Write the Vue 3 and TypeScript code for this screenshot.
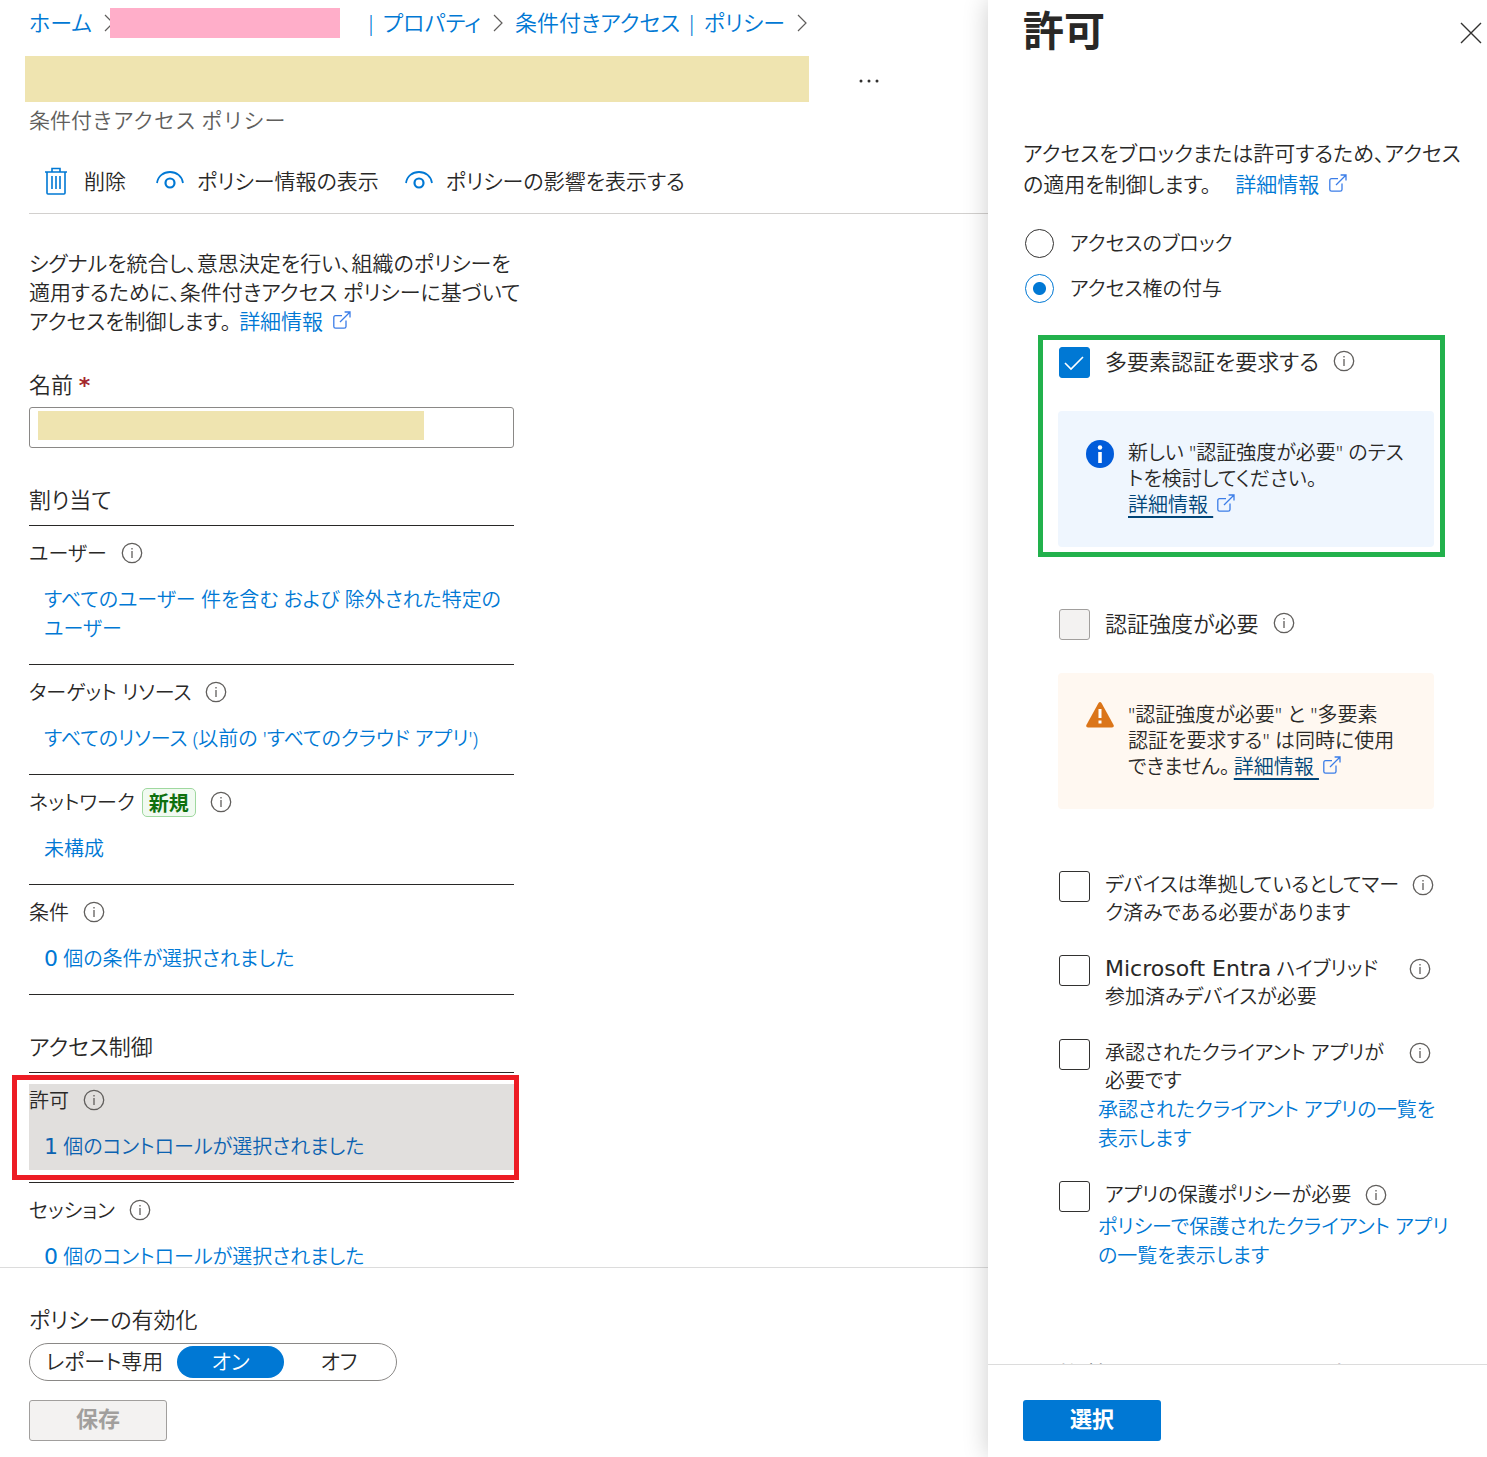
<script setup lang="ts">
import { h, ref } from 'vue'

interface PolicyRow {
  label: string
  count?: string
  value: string[]
  badge?: string
  selected?: boolean
}

interface GrantOption {
  id: string
  brand?: string
  label: string[]
  link?: string[]
}

const assignments: PolicyRow[] = [
  { label: 'ユーザー', value: ['すべてのユーザー 件を含む および 除外された特定の', 'ユーザー'] },
  { label: 'ターゲット リソース', value: ["すべてのリソース (以前の 'すべてのクラウド アプリ')"] },
  { label: 'ネットワーク', value: ['未構成'], badge: '新規' },
  { label: '条件', count: '0', value: [' 個の条件が選択されました'] },
]

const controls: PolicyRow[] = [
  { label: '許可', count: '1', value: [' 個のコントロールが選択されました'], selected: true },
  { label: 'セッション', count: '0', value: [' 個のコントロールが選択されました'] },
]

const sections = [
  { title: '割り当て', rows: assignments },
  { title: 'アクセス制御', rows: controls },
]

const grantOptions: GrantOption[] = [
  { id: 'compliant', label: ['デバイスは準拠しているとしてマー', 'ク済みである必要があります'] },
  { id: 'hybrid', brand: 'Microsoft Entra', label: [' ハイブリッド', '参加済みデバイスが必要'] },
  {
    id: 'approved',
    label: ['承認されたクライアント アプリが', '必要です'],
    link: ['承認されたクライアント アプリの一覧を', '表示します'],
  },
  {
    id: 'protection',
    label: ['アプリの保護ポリシーが必要'],
    link: ['ポリシーで保護されたクライアント アプリ', 'の一覧を表示します'],
  },
]

const states = ['レポート専用', 'オン', 'オフ']
const policyState = ref('オン')
const accessMode = ref('grant')
const requireMfa = ref(true)
const policyName = ref('')

const InfoIcon = () =>
  h('svg', { class: 'info-icon', width: 22, height: 22, viewBox: '0 0 22 22', fill: 'none', stroke: '#605e5c', 'aria-hidden': 'true' }, [
    h('circle', { cx: 11, cy: 11, r: 9.7, 'stroke-width': 1.3 }),
    h('path', { d: 'M11 9v7M11 6v1.6', 'stroke-width': 1.3 }),
  ])

const LinkIcon = () =>
  h('svg', { class: 'link-icon', width: 18, height: 18, viewBox: '0 0 18 18', fill: 'none', stroke: '#3b7de8', 'stroke-width': 1.3, 'aria-hidden': 'true' }, [
    h('path', { d: 'M9 4.7H2.6Q.8 4.7.8 6.5V15.4Q.8 17.2 2.6 17.2H11.2Q13 17.2 13 15.4V9.5' }),
    h('path', { d: 'M7 11 16.8 1.2M11.6 1H17V6.4' }),
  ])

const Chevron = () =>
  h('svg', { class: 'chevron', width: 10, height: 18, viewBox: '0 0 10 18', fill: 'none', stroke: '#605e5c', 'stroke-width': 1.2, 'aria-hidden': 'true' }, [
    h('path', { d: 'M1 1 9 9 1 17' }),
  ])

const EyeIcon = () =>
  h('svg', { width: 28, height: 20, viewBox: '0 0 28 20', fill: 'none', stroke: '#0078d4', 'aria-hidden': 'true' }, [
    h('path', { d: 'M1 12C2 5 7.500 1 14 1S26 5 27 12', 'stroke-width': 1.8 }),
    h('circle', { cx: 14, cy: 12, r: 4.5, 'stroke-width': 2.2 }),
  ])
</script>

<template>
  <div class="shell">
    <main class="policy">
      <header class="policy-head">
        <nav class="breadcrumb" aria-label="階層リンク">
          <a href="#">ホーム</a>
          <Chevron />
          <span class="tenant"></span>
          <a href="#"><span class="bar">|</span>プロパティ</a>
          <Chevron />
          <a href="#">条件付きアクセス <span class="bar">|</span>ポリシー</a>
          <Chevron />
        </nav>
        <div class="title-row">
          <span class="title-mask"></span>
          <button class="more" type="button" aria-label="その他">
            <svg width="20" height="4" viewBox="0 0 20 4" fill="#323130"><circle cx="2" cy="2" r="1.500" /><circle cx="10" cy="2" r="1.500" /><circle cx="18" cy="2" r="1.500" /></svg>
          </button>
        </div>
        <p class="subtitle">条件付きアクセス ポリシー</p>
        <div class="toolbar">
          <button type="button" class="delete">
            <svg class="trash" width="24" height="28" viewBox="0 0 24 28" fill="none" stroke="#0078d4" stroke-width="1.600">
              <path d="M1 5H23M8 5V1.500H16V5M3 5V26Q3 27 4 27H20Q21 27 21 26V5" />
              <path d="M8 9V22M12 9V22M16 9V22" />
            </svg>
            削除
          </button>
          <button type="button"><EyeIcon />ポリシー情報の表示</button>
          <button type="button"><EyeIcon />ポリシーの影響を表示する</button>
        </div>
      </header>

      <div class="policy-body">
        <p class="intro">
          シグナルを統合し、意思決定を行い、組織のポリシーを<br />適用するために、条件付きアクセス ポリシーに基づいて<br />アクセスを制御します。<a href="#">詳細情報<LinkIcon /></a>
        </p>

        <label class="field-label" for="policy-name">名前 <span class="required">*</span></label>
        <div class="field">
          <input id="policy-name" v-model="policyName" type="text" />
          <span class="name-mask"></span>
        </div>

        <section v-for="section in sections" :key="section.title">
          <h2>{{ section.title }}</h2>
          <div v-for="row in section.rows" :key="row.label" class="row" :class="{ marked: row.selected }">
            <div class="row-inner">
              <div class="row-label">
                {{ row.label }}<span v-if="row.badge" class="badge">{{ row.badge }}</span><InfoIcon />
              </div>
              <a href="#" class="row-value"><b v-if="row.count" class="latin">{{ row.count }}</b><template v-for="(line, i) in row.value" :key="line"><br v-if="i" />{{ line }}</template></a>
            </div>
          </div>
        </section>
      </div>

      <footer class="policy-foot">
        <fieldset>
          <legend>ポリシーの有効化</legend>
          <div class="pill">
            <label v-for="s in states" :key="s" :class="{ on: policyState === s }">
              <input v-model="policyState" type="radio" name="state" :value="s" />{{ s }}
            </label>
          </div>
        </fieldset>
        <button class="save" type="button" disabled>保存</button>
      </footer>
    </main>

    <aside class="panel">
      <header class="panel-head">
        <h1>許可</h1>
        <button class="close" type="button" aria-label="閉じる">
          <svg width="22" height="22" viewBox="0 0 22 22" stroke="#323130" stroke-width="1.400"><path d="M1 1 21 21M21 1 1 21" /></svg>
        </button>
      </header>

      <div class="panel-body">
        <p class="panel-intro">
          アクセスをブロックまたは許可するため、アクセス<br />の適用を制御します。<a href="#">詳細情報<LinkIcon /></a>
        </p>

        <div class="radios">
          <label><input v-model="accessMode" type="radio" name="mode" value="block" />アクセスのブロック</label>
          <label><input v-model="accessMode" type="radio" name="mode" value="grant" />アクセス権の付与</label>
        </div>

        <div class="options">
          <div class="group highlighted">
            <div class="option">
              <input id="mfa" v-model="requireMfa" type="checkbox" />
              <label for="mfa">多要素認証を要求する</label>
              <InfoIcon />
            </div>
            <div class="notice info">
              <svg width="28" height="28" viewBox="0 0 28 28">
                <circle cx="14" cy="14" r="14" fill="#015cda" />
                <circle cx="14" cy="7.500" r="2.200" fill="#fff" />
                <path d="M14 12V23" stroke="#fff" stroke-width="3.600" />
              </svg>
              <p>新しい "認証強度が必要" のテス<br />トを検討してください。<br /><a href="#"><u>詳細情報&nbsp;</u><LinkIcon /></a></p>
            </div>
          </div>

          <div class="group">
            <div class="option">
              <input id="strength" type="checkbox" disabled />
              <label for="strength">認証強度が必要</label>
              <InfoIcon />
            </div>
            <div class="notice warning">
              <svg width="28" height="26" viewBox="0 0 28 26">
                <path d="M12.500 1Q14-1 15.500 1L27.600 23Q28.400 25.400 26 25.500H2Q-.4 25.400.4 23Z" fill="#db7519" />
                <path d="M14 7V16M14 18.500V21.500" stroke="#fff" stroke-width="3" />
              </svg>
              <p>"認証強度が必要" と "多要素<br />認証を要求する" は同時に使用<br />できません。<a href="#" class="after-stop"><u>詳細情報&nbsp;</u><LinkIcon /></a></p>
            </div>
          </div>

          <div class="plain-options">
            <div v-for="option in grantOptions" :key="option.id">
              <div class="option">
                <input :id="option.id" type="checkbox" />
                <label :for="option.id" :class="{ wide: option.label.length > 1 }"><b v-if="option.brand" class="latin">{{ option.brand }}</b><template v-for="(line, i) in option.label" :key="line"><br v-if="i" />{{ line }}</template></label>
                <InfoIcon />
              </div>
              <a v-if="option.link" href="#" class="option-link"><template v-for="(line, i) in option.link" :key="line"><br v-if="i" />{{ line }}</template></a>
            </div>
          </div>

          <h3>複数のコントロールの場合</h3>
        </div>
      </div>

      <footer class="panel-foot">
        <button class="select" type="button">選択</button>
      </footer>
    </aside>
  </div>
</template>

<style>
body {
  margin: 0;
  background: #fff;
}
</style>

<style scoped>
.shell {
  display: grid;
  grid-template-columns: minmax(0, 1fr) 499px;
  height: 100vh;
  overflow: hidden;
  color: #292827;
  font-family: "Noto Sans", "Noto Sans CJK JP", sans-serif;
  font-size: 22px;
  font-weight: 350;
  font-feature-settings: "palt";
  line-height: 29px;
  white-space: nowrap;
}

.shell * {
  box-sizing: border-box;
}

p,
h1,
h2,
h3 {
  margin: 0;
  font-weight: inherit;
}

svg {
  flex: none;
}

a {
  color: #0078d4;
  text-decoration: none;
}

button,
input {
  margin: 0;
  font: inherit;
  font-feature-settings: inherit;
  color: inherit;
}

button {
  padding: 0;
  border: 0;
  background: none;
}

.latin {
  font-family: "DejaVu Sans", sans-serif;
  font-size: 22px;
  font-weight: 400;
  line-height: 20px;
}

.link-icon {
  margin-left: 10px;
}

/* policy page */
.policy {
  display: flex;
  flex-direction: column;
  min-width: 0;
  min-height: 0;
}

.policy-head {
  padding-left: 29px;
}

.breadcrumb {
  display: flex;
  align-items: center;
  height: 44px;
}

.breadcrumb .chevron {
  margin: 2px 12px 0;
}

.bar {
  padding-right: 6px;
}

.tenant {
  z-index: 1;
  width: 230px;
  height: 30px;
  margin: 2px 25px 0 -16px;
  background: #ffaec9;
}

.title-row {
  display: flex;
  align-items: center;
  gap: 50px;
  margin: 12px 0 0 -4px;
}

.title-mask {
  width: 784px;
  height: 46px;
  background: #efe4b0;
}

.more {
  display: flex;
  height: 20px;
  margin-top: 4px;
  align-items: center;
}

.subtitle {
  margin-top: 4px;
  color: #605e5c;
  font-size: 21px;
  font-feature-settings: normal;
}

.toolbar {
  display: flex;
  gap: 26px;
  height: 79px;
  padding: 30px 0 0 15px;
  border-bottom: 1px solid #d2d0ce;
  font-size: 21px;
}

.toolbar button {
  display: flex;
  align-items: center;
  gap: 13px;
  height: 32px;
}

.toolbar .delete {
  gap: 16px;
  margin-right: 4px;
}

.policy-body {
  flex: 1;
  width: 514px;
  min-height: 0;
  padding: 35px 0 0 29px;
}

.intro {
  font-size: 21px;
}

.intro a {
  margin-left: 8px;
}

.field-label {
  display: block;
  margin-top: 34px;
}

.required {
  color: #a4262c;
  font-family: "DejaVu Sans", sans-serif;
  font-weight: 700;
  line-height: 20px;
}

.field {
  position: relative;
  margin-top: 8px;
}

.field input {
  display: block;
  width: 100%;
  height: 41px;
  padding: 0 8px;
  border: 1px solid #8a8886;
  border-radius: 3px;
}

.name-mask {
  position: absolute;
  top: 4px;
  left: 9px;
  width: 386px;
  height: 29px;
  background: #efe4b0;
}

h2 {
  height: 78px;
  padding-top: 37px;
  border-bottom: 1px solid #292827;
  font-size: 22px;
}

.row {
  position: relative;
  padding: 11px 0 12px;
  border-bottom: 1px solid #292827;
  font-size: 20px;
}

.row-inner {
  padding-bottom: 9px;
}

.row-label {
  display: flex;
  align-items: center;
  height: 32px;
  margin-bottom: 16px;
}

.row-label .info-icon {
  margin-left: 14px;
}

.row-value {
  display: block;
  padding-left: 15px;
}

.badge {
  height: 29px;
  margin-left: 7px;
  padding: 0 6px;
  border: 1px solid #9fd89f;
  border-radius: 5px;
  background: #f1faf1;
  color: #0e700e;
  font-weight: 700;
}

.marked .row-inner {
  background: #e1dfdd;
}

.marked .row-value {
  color: #0b62b1;
}

.marked::after {
  content: "";
  position: absolute;
  inset: 2px -5px 2px -17px;
  border: 5px solid #ed1c24;
}

.policy-foot {
  z-index: 1;
  flex: none;
  height: 190px;
  padding: 37px 29px 0;
  border-top: 1px solid #dcdcdc;
  background: #fff;
}

fieldset {
  margin: 0;
  padding: 0;
  border: 0;
}

legend {
  padding: 0;
}

.pill {
  display: grid;
  grid-template-columns: 145px 107px 1fr;
  width: 368px;
  height: 38px;
  margin-top: 9px;
  padding: 2px;
  border: 1px solid #8a8886;
  border-radius: 19px;
  font-size: 21px;
}

.pill label {
  position: relative;
  border-radius: 16px;
  line-height: 30px;
  text-align: center;
}

.pill input {
  position: absolute;
  inset: 0;
  appearance: none;
}

.pill .on {
  background: #0078d4;
  color: #fff;
}

.save,
.select {
  display: block;
  width: 138px;
  height: 41px;
  padding-bottom: 5px;
  border-radius: 3px;
  font-weight: 700;
}

.save {
  margin-top: 19px;
  border: 1px solid #a19f9d;
  background: #f3f2f1;
  color: #a19f9d;
}

/* grant panel */
.panel {
  z-index: 2;
  display: flex;
  flex-direction: column;
  min-height: 0;
  background: #fff;
  box-shadow: 0 0 24px rgba(0, 0, 0, 0.2);
}

.panel-head {
  display: flex;
  justify-content: space-between;
  height: 138px;
  padding: 0 5px 0 35px;
}

h1 {
  font-size: 41px;
  font-weight: 700;
  line-height: 60px;
}

.close {
  display: flex;
  height: 66px;
  align-items: center;
}

.panel-body {
  flex: 1;
  min-height: 0;
  padding-left: 35px;
  overflow: hidden;
}

.panel-intro {
  font-size: 21px;
  line-height: 31px;
}

.panel-intro a {
  margin-left: 24px;
}

.radios {
  display: flex;
  flex-direction: column;
  gap: 16px;
  margin-top: 29px;
  padding-left: 2px;
  font-size: 20px;
}

.radios label {
  display: flex;
  align-items: center;
  gap: 16px;
}

.radios input {
  appearance: none;
  width: 29px;
  height: 29px;
  border: 1px solid #323130;
  border-radius: 50%;
}

.radios input:checked {
  border-color: #0078d4;
  background: radial-gradient(circle, #0078d4 6px, transparent 7px);
}

.options {
  padding: 44px 53px 0 35px;
}

.group {
  position: relative;
  margin-bottom: 62px;
}

.highlighted::after {
  content: "";
  position: absolute;
  inset: -12px -11px -10px -20px;
  border: 5px solid #22b14c;
  pointer-events: none;
}

.option {
  display: flex;
  align-items: flex-start;
  line-height: 28px;
}

.option input {
  flex: none;
  appearance: none;
  width: 31px;
  height: 31px;
  margin: 0 15px 0 1px;
  border: 1px solid #323130;
  border-radius: 3px;
}

.option input:disabled {
  border-color: #a19f9d;
  background: #f3f2f1;
}

.option input:checked {
  border-color: #0078d4;
  background: #0078d4 url("data:image/svg+xml,%3Csvg xmlns='http://www.w3.org/2000/svg' viewBox='0 0 31 31' fill='none' stroke='%23fff' stroke-width='1.600'%3E%3Cpath d='M6 16 12 22 24 10'/%3E%3C/svg%3E") center / 31px;
}

.option .info-icon {
  margin: 3px 0 0 14px;
}

.notice {
  display: flex;
  gap: 14px;
  margin-top: 33px;
  padding: 29px 28px;
  border-radius: 4px;
  font-size: 20px;
  line-height: 26px;
}

.notice.info {
  background: #eff6fe;
}

.notice.warning {
  background: #fff8f1;
}

.notice p a {
  color: #004578;
}

.notice .link-icon {
  margin-left: 4px;
}

.notice .after-stop {
  margin-left: 4px;
}

.notice u {
  text-decoration-thickness: 2px;
  text-underline-offset: 4px;
}

.plain-options {
  display: flex;
  flex-direction: column;
  gap: 28px;
  font-size: 20px;
}

.wide {
  min-width: 290px;
}

.option-link {
  display: block;
  padding-left: 40px;
}

h3 {
  margin-top: 92px;
}

.panel-foot {
  flex: none;
  height: 93px;
  padding: 35px;
  border-top: 1px solid #dcdcdc;
}

.select {
  background: #0078d4;
  color: #fff;
}
</style>
